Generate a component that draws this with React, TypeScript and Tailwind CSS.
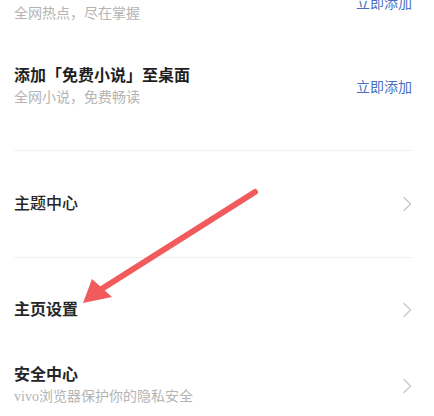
const font = {
  fontFamily: '"Liberation Serif", "Noto Sans CJK SC", serif',
};

function Chevron() {
  return (
    <svg width="10" height="16" viewBox="0 0 10 16" fill="none">
      <polyline
        points="2,1.5 8.5,8 2,14.5"
        stroke="#c9c9c9"
        strokeWidth="1.4"
        strokeLinecap="round"
        strokeLinejoin="round"
      />
    </svg>
  );
}

function AddRow({ title, desc }: { title: string; desc: string }) {
  return (
    <div className="flex h-[84px] items-center justify-between">
      <div className="flex flex-col">
        <span className="text-[16px] leading-[22px] font-bold text-[#1f1f1f]">
          {title}
        </span>
        <span className="text-[14px] leading-[22px] text-[#b4b4b4]">{desc}</span>
      </div>
      <span className="text-[14px] text-[#4b6fc0]">立即添加</span>
    </div>
  );
}

function LinkRow({
  title,
  desc,
  className,
  weight = "font-semibold",
}: {
  title: string;
  desc?: string;
  className: string;
  weight?: string;
}) {
  return (
    <div className={`flex items-center justify-between ${className}`}>
      <div className="flex flex-col">
        <span className={`text-[16px] leading-[22px] text-[#262626] ${weight}`}>
          {title}
        </span>
        {desc && (
          <span className="text-[14px] leading-[22px] text-[#b4b4b4]">{desc}</span>
        )}
      </div>
      <Chevron />
    </div>
  );
}

export default function App() {
  return (
    <div
      className="relative h-[416px] w-[434px] overflow-hidden bg-white"
      style={font}
    >
      <div className="-mt-[39px] pl-[14px] pr-[22px]">
        <AddRow title="添加「热点资讯」至桌面" desc="全网热点，尽在掌握" />
        <AddRow title="添加「免费小说」至桌面" desc="全网小说，免费畅读" />
        <div className="mt-[21px] border-t border-[#f1f1f1]" />
        <LinkRow title="主题中心" className="h-[106px]" weight="font-medium" />
        <div className="border-t border-[#f1f1f1]" />
        <LinkRow title="主页设置" className="h-[104px]" />
        <LinkRow
          title="安全中心"
          desc="vivo浏览器保护你的隐私安全"
          className="h-[48px]"
        />
      </div>

      <svg
        className="pointer-events-none absolute left-0 top-0"
        width="434"
        height="416"
        viewBox="0 0 434 416"
      >
        <line
          x1="255"
          y1="192"
          x2="100"
          y2="290"
          stroke="#f25b5b"
          strokeWidth="6"
          strokeLinecap="round"
        />
        <polygon points="83,303 92,279 112,297" fill="#f25b5b" />
      </svg>
    </div>
  );
}
